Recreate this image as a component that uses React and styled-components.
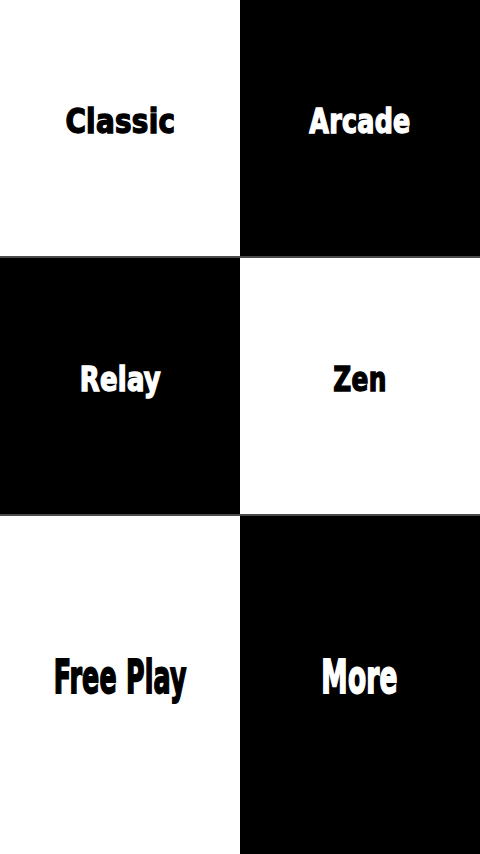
import React from "react";
import styled, { createGlobalStyle } from "styled-components";

const Global = createGlobalStyle`
  html, body { margin: 0; padding: 0; height: 100%; background: #000; }
  #root { height: 100%; }
`;

const Board = styled.div`
  display: grid;
  grid-template-columns: 1fr 1fr;
  grid-template-rows: 256px 256px 1fr;
  row-gap: 2px;
  background: #4a4a4a;
  width: 480px;
  height: 854px;
`;

const Tile = styled.button`
  border: 0;
  margin: 0;
  padding: 0 0 ${(p) => p.$lift}px 0;
  display: flex;
  align-items: center;
  justify-content: center;
  background: ${(p) => (p.$dark ? "#000" : "#fff")};
  color: ${(p) => (p.$dark ? "#fff" : "#000")};
  cursor: pointer;
`;

const Label = styled.span`
  font-family: "DejaVu Sans Condensed", "Liberation Sans", sans-serif;
  font-weight: 700;
  font-size: ${(p) => p.$size}px;
  line-height: 1;
  letter-spacing: 0.3px;
  -webkit-text-stroke: ${(p) => p.$stroke}px currentColor;
  display: inline-block;
  white-space: nowrap;
  transform: scale(${(p) => p.$sx}, ${(p) => p.$sy});
`;

const modes = [
  { name: "Classic", dark: false, size: 30, lift: 12, stroke: 1.2, sx: 1.03, sy: 1.12 },
  { name: "Arcade", dark: true, size: 30, lift: 12, stroke: 1.2, sx: 0.94, sy: 1.12 },
  { name: "Relay", dark: true, size: 30, lift: 12, stroke: 1.2, sx: 0.96, sy: 1.12 },
  { name: "Zen", dark: false, size: 30, lift: 12, stroke: 1.2, sx: 0.92, sy: 1.12 },
  { name: "Free Play", dark: false, size: 42, lift: 14, stroke: 1.6, sx: 0.67, sy: 1.1 },
  { name: "More", dark: true, size: 42, lift: 14, stroke: 1.6, sx: 0.7, sy: 1.1 },
];

export default function App() {
  return (
    <>
      <Global />
      <Board>
        {modes.map((m) => (
          <Tile key={m.name} $dark={m.dark} $lift={m.lift}>
            <Label $size={m.size} $stroke={m.stroke} $sx={m.sx} $sy={m.sy}>
              {m.name}
            </Label>
          </Tile>
        ))}
      </Board>
    </>
  );
}
